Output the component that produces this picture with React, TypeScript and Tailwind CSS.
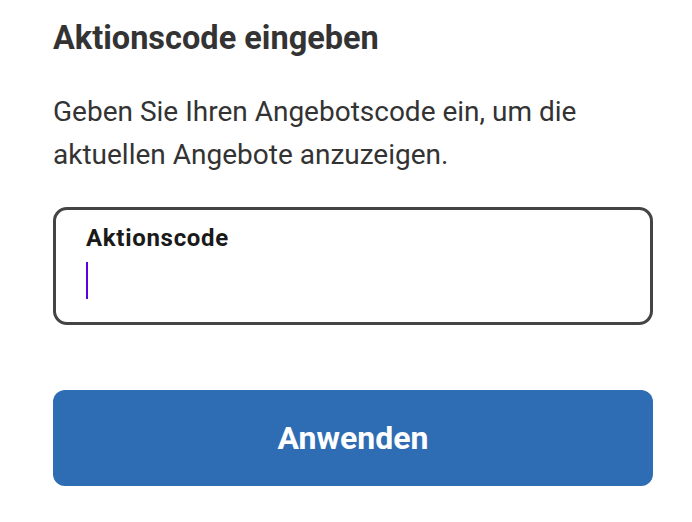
export default function App() {
  return (
    <div className="min-h-[522px] bg-white px-[53px] pt-[19px] font-['Roboto',sans-serif] text-[#333333]">
      <div className="w-[600px]">
        <h1 className="text-[32.5px] leading-[38px] font-bold">Aktionscode eingeben</h1>
        <p className="mt-[33px] text-[28px] leading-[43px]">
          Geben Sie Ihren Angebotscode ein, um die aktuellen Angebote anzuzeigen.
        </p>
        <label className="mt-[31px] block h-[118px] rounded-[14px] border-[3px] border-[#444444] px-[30px] pt-[14px]">
          <span className="block text-[24px] leading-[28px] font-bold tracking-[0.7px] text-[#1a1a1a]">Aktionscode</span>
          <span className="mt-[10px] flex h-[37px] items-stretch">
            <span className="w-[2px] bg-[#5b00e0]" />
            <input className="flex-1 text-[28px] text-[#1a1a1a] caret-transparent outline-none" />
          </span>
        </label>
        <button className="mt-[65px] block h-[96px] w-full rounded-[12px] bg-[#2e6db4] text-[32px] font-bold text-white">
          Anwenden
        </button>
      </div>
    </div>
  );
}
